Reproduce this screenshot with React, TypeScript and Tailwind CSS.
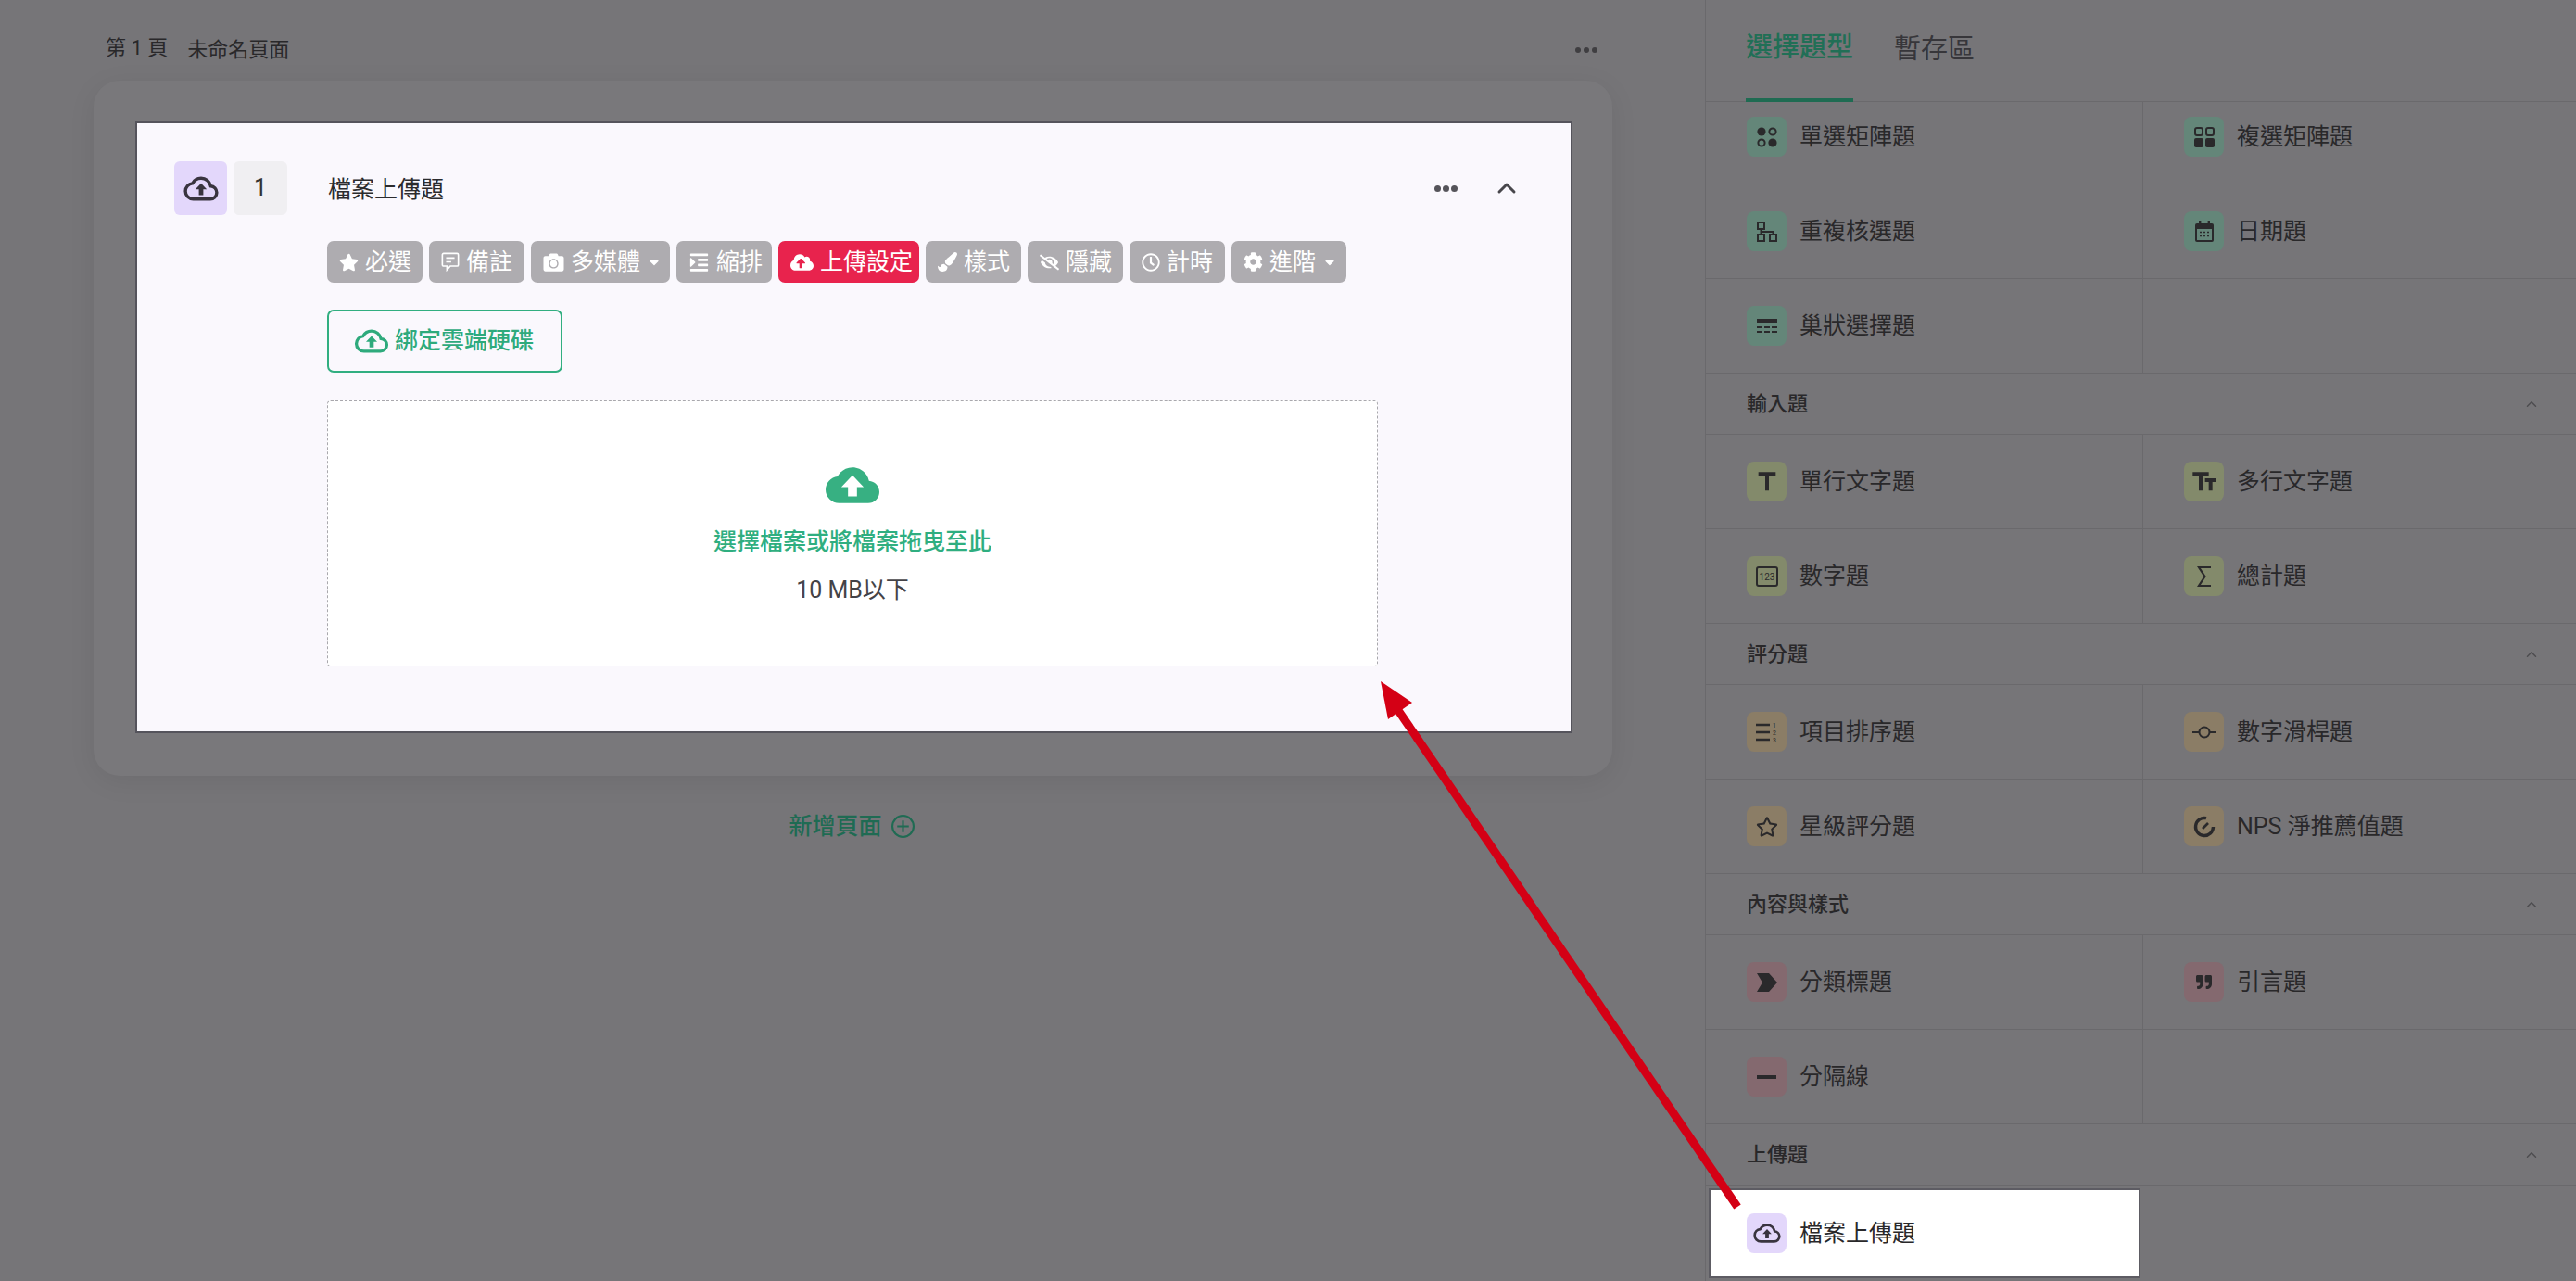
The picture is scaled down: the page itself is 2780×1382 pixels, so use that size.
import type { ReactNode } from "react"
import { ChevronUp } from "lucide-react"
import {
  FaStar,
  FaCamera,
  FaIndent,
  FaCloudUploadAlt,
  FaPaintBrush,
  FaEyeSlash,
  FaRegClock,
  FaCog,
  FaCaretDown,
  FaRegStar,
  FaQuoteRight,
} from "react-icons/fa"
import { MdTitle, MdTextFields } from "react-icons/md"

const CLOUD =
  "M19.35,10.03C18.67,6.59 15.64,4 12,4C9.11,4 6.6,5.64 5.35,8.03C2.34,8.36 0,10.9 0,14A6,6 0 0,0 6,20H19A5,5 0 0,0 24,15C24,12.36 21.95,10.22 19.35,10.03Z"

function CloudOutline({ className }: { className?: string }) {
  return (
    <svg viewBox="-1.5 2.5 27 19" className={className}>
      <path d={CLOUD} fill="none" stroke="currentColor" strokeWidth="2.4" />
      <path d="M12 8l4.4 4.6h-2.7V17h-3.4v-4.4H7.6Z" fill="currentColor" />
    </svg>
  )
}

function CloudSolid({ className }: { className?: string }) {
  return (
    <svg viewBox="0 4 24 16" className={className}>
      <path d={CLOUD} fill="currentColor" />
      <path d="M12 7.6l5 5.2h-3V17h-4v-4.2H7Z" fill="#fff" />
    </svg>
  )
}

const ic = "w-[22px] h-[22px]"

const RadioMatrix = () => (
  <svg viewBox="0 0 22 22" className={ic}>
    <circle cx="5" cy="5" r="4.6" fill="currentColor" />
    <circle cx="17" cy="5" r="3.6" fill="none" stroke="currentColor" strokeWidth="2" />
    <circle cx="5" cy="17" r="3.6" fill="none" stroke="currentColor" strokeWidth="2" />
    <circle cx="17" cy="17" r="4.6" fill="currentColor" />
  </svg>
)

const CheckMatrix = () => (
  <svg viewBox="0 0 22 22" className={ic}>
    <rect x="1" y="1" width="8" height="8" rx="2" fill="none" stroke="currentColor" strokeWidth="2" />
    <rect x="13" y="1" width="8" height="8" rx="2" fill="none" stroke="currentColor" strokeWidth="2" />
    <rect x="0" y="12" width="10" height="10" rx="2" fill="currentColor" />
    <rect x="12" y="12" width="10" height="10" rx="2" fill="currentColor" />
  </svg>
)

const Repeat = () => (
  <svg viewBox="0 0 22 22" className={ic} fill="none" stroke="currentColor" strokeWidth="2">
    <rect x="1" y="1" width="7" height="7" />
    <rect x="1" y="14" width="7" height="7" />
    <rect x="14" y="14" width="7" height="7" />
    <path d="M4.5 8v6M4.5 11h13v3" />
  </svg>
)

const CalendarBox = () => (
  <svg viewBox="0 0 22 24" className="w-[22px] h-[24px]">
    <rect x="1" y="3" width="20" height="20" rx="2" fill="currentColor" />
    <rect x="5" y="0" width="2.4" height="5" fill="currentColor" />
    <rect x="14.6" y="0" width="2.4" height="5" fill="currentColor" />
    <rect x="3" y="9" width="16" height="12" fill="#648679" />
    <path d="M6 12.5h2M10 12.5h2M14 12.5h2M6 16.5h2M10 16.5h2M14 16.5h2" stroke="currentColor" strokeWidth="1.6" />
  </svg>
)

const Nested = () => (
  <svg viewBox="0 0 22 16" className="w-[22px] h-[16px]">
    <rect x="0" y="0" width="22" height="5" fill="currentColor" />
    <path d="M0 9h6M8 9h6M16 9h6M0 14h6M8 14h6M16 14h6" stroke="currentColor" strokeWidth="2" />
  </svg>
)

const NumberBox = () => (
  <svg viewBox="0 0 24 22" className="w-[24px] h-[22px]">
    <rect x="1" y="1" width="22" height="20" rx="2" fill="none" stroke="currentColor" strokeWidth="2" />
    <text x="12" y="15" textAnchor="middle" fontSize="10" fill="currentColor" fontFamily="Roboto, sans-serif">123</text>
  </svg>
)

const Sum = () => (
  <svg viewBox="0 0 16 24" className="w-[16px] h-[24px]" fill="none" stroke="currentColor" strokeWidth="2.2">
    <path d="M15 2H2l6.5 10L2 22h13" />
  </svg>
)

const Sorting = () => (
  <svg viewBox="0 0 24 24" className="w-[24px] h-[24px]">
    <path d="M0 4h15M0 12h15M0 20h15" stroke="currentColor" strokeWidth="2.6" />
    <text x="20" y="7" textAnchor="middle" fontSize="7" fill="currentColor" fontFamily="Roboto, sans-serif">1</text>
    <text x="20" y="15" textAnchor="middle" fontSize="7" fill="currentColor" fontFamily="Roboto, sans-serif">2</text>
    <text x="20" y="23" textAnchor="middle" fontSize="7" fill="currentColor" fontFamily="Roboto, sans-serif">3</text>
  </svg>
)

const Slider = () => (
  <svg viewBox="0 0 26 14" className="w-[26px] h-[14px]" fill="none" stroke="currentColor" strokeWidth="2">
    <circle cx="13" cy="7" r="5.5" />
    <path d="M0 7h7M19 7h7" />
  </svg>
)

const Nps = () => (
  <svg viewBox="0 0 24 24" className="w-[24px] h-[24px]" fill="none" stroke="currentColor" strokeWidth="3.4">
    <path d="M14 2.7A9.5 9.5 0 1 0 21.5 12" />
    <path d="M10 14l6-6" strokeWidth="2.6" />
  </svg>
)

const Section = () => (
  <svg viewBox="0 0 22 22" className={ic}>
    <path d="M0 1h13l9 10-9 10H0l6-10Z" fill="currentColor" />
  </svg>
)

const Note = () => (
  <svg viewBox="0 0 22 23" className="w-[20px] h-[21px]" fill="none" stroke="currentColor" strokeWidth="1.8">
    <path d="M3 1.5h16A1.5 1.5 0 0 1 20.5 3v12a1.5 1.5 0 0 1-1.5 1.5h-8l-4 4.5v-4.5H3A1.5 1.5 0 0 1 1.5 15V3A1.5 1.5 0 0 1 3 1.5Z" />
    <path d="M6 7h10M6 11.5h6" />
  </svg>
)

const Divider = () => <div className="w-[21px] h-[4px] bg-current" />

type Item = { label: string; icon: ReactNode } | null

const boxGreen = "bg-[#648679]"
const boxOlive = "bg-[#838a6b]"
const boxTan = "bg-[#8b7d66]"
const boxPink = "bg-[#84696f]"

const sections: { title?: string; box: string; rows: [Item, Item][] }[] = [
  {
    box: boxGreen,
    rows: [
      [{ label: "單選矩陣題", icon: <RadioMatrix /> }, { label: "複選矩陣題", icon: <CheckMatrix /> }],
      [{ label: "重複核選題", icon: <Repeat /> }, { label: "日期題", icon: <CalendarBox /> }],
      [{ label: "巢狀選擇題", icon: <Nested /> }, null],
    ],
  },
  {
    title: "輸入題",
    box: boxOlive,
    rows: [
      [
        { label: "單行文字題", icon: <MdTitle className="w-[32px] h-[32px]" /> },
        { label: "多行文字題", icon: <MdTextFields className="w-[32px] h-[32px]" /> },
      ],
      [{ label: "數字題", icon: <NumberBox /> }, { label: "總計題", icon: <Sum /> }],
    ],
  },
  {
    title: "評分題",
    box: boxTan,
    rows: [
      [{ label: "項目排序題", icon: <Sorting /> }, { label: "數字滑桿題", icon: <Slider /> }],
      [
        { label: "星級評分題", icon: <FaRegStar className="w-[24px] h-[24px]" /> },
        { label: "NPS 淨推薦值題", icon: <Nps /> },
      ],
    ],
  },
  {
    title: "內容與樣式",
    box: boxPink,
    rows: [
      [
        { label: "分類標題", icon: <Section /> },
        { label: "引言題", icon: <FaQuoteRight className="w-[17px] h-[17px]" /> },
      ],
      [{ label: "分隔線", icon: <Divider /> }, null],
    ],
  },
]

const toolbar: { label: string; width: string; icon: ReactNode; caret?: boolean; active?: boolean }[] = [
  { label: "必選", width: "w-[103px]", icon: <FaStar className="w-[21px] h-[20px]" /> },
  { label: "備註", width: "w-[103px]", icon: <Note /> },
  { label: "多媒體", width: "w-[150px]", icon: <FaCamera className="w-[23px] h-[22px]" />, caret: true },
  { label: "縮排", width: "w-[103px]", icon: <FaIndent className="w-[23px] h-[22px]" /> },
  { label: "上傳設定", width: "w-[152px]", icon: <FaCloudUploadAlt className="w-[25px] h-[22px]" />, active: true },
  { label: "樣式", width: "w-[103px]", icon: <FaPaintBrush className="w-[21px] h-[21px]" /> },
  { label: "隱藏", width: "w-[103px]", icon: <FaEyeSlash className="w-[21px] h-[18px]" /> },
  { label: "計時", width: "w-[103px]", icon: <FaRegClock className="w-[20px] h-[20px]" /> },
  { label: "進階", width: "w-[124px]", icon: <FaCog className="w-[21px] h-[21px]" />, caret: true },
]

function Cell({ item, box }: { item: Item; box: string }) {
  if (!item) return <div />
  return (
    <div className="flex items-center gap-[14px] pl-[44px] h-full">
      <div className={`w-[43px] h-[43px] rounded-[8px] flex items-center justify-center text-[#2a292b] ${box}`}>
        {item.icon}
      </div>
      <span className="text-[25px] text-[#29282a]">{item.label}</span>
    </div>
  )
}

function SectionHead({ title }: { title: string }) {
  return (
    <div className="h-[66px] flex items-center justify-between pl-[44px] pr-[39px] border-b border-[#6a696c]">
      <span className="text-[22px] font-medium text-[#29282a]">{title}</span>
      <ChevronUp className="w-[18px] h-[18px] text-[#4e4d50]" strokeWidth={2} />
    </div>
  )
}

export default function App() {
  return (
    <div className="relative w-[2780px] h-[1382px] flex overflow-hidden bg-[#767578] font-['Roboto','Noto_Sans_CJK_TC',sans-serif]">
      {/* editor */}
      <div className="w-[1840px] shrink-0 pl-[101px]">
        <div className="h-[87px] w-[1639px] flex items-center justify-between pl-[13px] pr-[13px] pt-[20px]">
          <div className="flex items-center gap-[21px] text-[#29282a]">
            <span className="text-[22px] -mt-[4px]">第 1 頁</span>
            <span className="text-[22px]">未命名頁面</span>
          </div>
          <div className="flex gap-[3px] mr-[3px]">
            <span className="w-[6px] h-[6px] rounded-full bg-[#3f3e41]" />
            <span className="w-[6px] h-[6px] rounded-full bg-[#3f3e41]" />
            <span className="w-[6px] h-[6px] rounded-full bg-[#3f3e41]" />
          </div>
        </div>

        <div className="w-[1639px] h-[750px] rounded-[28px] bg-[#79787b] pl-[45px] pt-[44px] shadow-[0_6px_30px_rgba(0,0,0,0.07)]">
          <div className="w-[1551px] h-[660px] bg-[#faf8fd] border-2 border-[#55545c] pl-[40px] pt-[41px]">
            <div className="flex items-center h-[58px]">
              <div className="w-[57px] h-[58px] rounded-[6px] bg-[#e3d7fb] flex items-center justify-center text-[#39343f]">
                <CloudOutline className="w-[38px] h-[27px]" />
              </div>
              <div className="ml-[7px] w-[58px] h-[58px] rounded-[6px] bg-[#f0eff2] flex items-center justify-center text-[25px] text-[#333]">
                1
              </div>
              <span className="ml-[44px] mt-[3px] text-[25px] text-[#2b2b2d]">檔案上傳題</span>
              <div className="ml-auto mr-[53px] flex items-center gap-[37px]">
                <div className="flex gap-[2px]">
                  <span className="w-[7px] h-[7px] rounded-full bg-[#55545a]" />
                  <span className="w-[7px] h-[7px] rounded-full bg-[#55545a]" />
                  <span className="w-[7px] h-[7px] rounded-full bg-[#55545a]" />
                </div>
                <ChevronUp className="w-[32px] h-[32px] text-[#48474c]" strokeWidth={2.2} />
              </div>
            </div>

            <div className="ml-[165px] mt-[28px] flex gap-[7px]">
              {toolbar.map(b => (
                <div
                  key={b.label}
                  className={`h-[45px] rounded-[7px] flex items-center gap-[7px] pl-[13px] text-white text-[25px] shrink-0 ${b.width} ${b.active ? "bg-[#e8234d]" : "bg-[#aeacb0]"}`}
                >
                  {b.icon}
                  <span>{b.label}</span>
                  {b.caret && <FaCaretDown className="w-[16px] h-[16px]" />}
                </div>
              ))}
            </div>

            <div className="ml-[165px] mt-[29px] w-[254px] h-[68px] rounded-[7px] border-2 border-[#31ae80] flex items-center justify-center gap-[6px] pr-[2px] text-[#2eaa7c]">
              <CloudOutline className="w-[38px] h-[26px]" />
              <span className="text-[25px] font-medium">綁定雲端硬碟</span>
            </div>

            <div className="ml-[165px] mt-[30px] w-[1134px] h-[287px] bg-white rounded-[4px] border border-dashed border-[#a9a8ad] flex flex-col items-center pt-[71px]">
              <CloudSolid className="w-[58px] h-[39px] text-[#37b082]" />
              <span className="mt-[24px] text-[25px] font-medium text-[#2fae80] leading-[36px]">選擇檔案或將檔案拖曳至此</span>
              <span className="mt-[16px] text-[25px] text-[#444347] leading-[36px]">10 MB以下</span>
            </div>
          </div>
        </div>

        <div className="w-[1639px] mt-[36px] flex items-center justify-center gap-[10px] pr-[3px] text-[#1f6b53]">
          <span className="text-[25px] font-medium">新增頁面</span>
          <svg viewBox="0 0 24 24" className="w-[25px] h-[25px]" fill="none" stroke="currentColor" strokeWidth="2">
            <circle cx="12" cy="12" r="11" />
            <path d="M12 6v12M6 12h12" />
          </svg>
        </div>
      </div>

      {/* question types */}
      <div className="w-[940px] h-full border-l border-[#6a696c] overflow-hidden">
        <div className="relative z-10 h-[110px] bg-[#767578] border-b border-[#6a696c] flex items-start gap-[44px] pl-[43px]">
          <div className="h-[110px] flex items-center border-b-4 border-[#1f6b52] pb-[2px] -mb-px">
            <span className="text-[29px] font-medium text-[#216f56]">選擇題型</span>
          </div>
          <div className="h-[110px] flex items-center pb-[2px]">
            <span className="text-[29px] text-[#37363a]">暫存區</span>
          </div>
        </div>

        <div className="-mt-[13px]">
          {sections.map(s => (
            <div key={s.box}>
              {s.title && <SectionHead title={s.title} />}
              {s.rows.map((row, i) => (
                <div key={i} className="grid grid-cols-[472px_1fr] h-[102px] border-b border-[#6a696c]">
                  <div className="border-r border-[#6a696c]">
                    <Cell item={row[0]} box={s.box} />
                  </div>
                  <Cell item={row[1]} box={s.box} />
                </div>
              ))}
            </div>
          ))}
          <SectionHead title="上傳題" />
          <div className="w-[472px] h-[102px] pl-[3px] pr-[3px] py-[3px]">
            <div className="h-[97px] bg-white border-2 border-[#5d5c63] flex items-center gap-[14px] pl-[39px]">
              <div className="w-[43px] h-[43px] rounded-[8px] bg-[#e3d7fb] flex items-center justify-center text-[#39343f]">
                <CloudOutline className="w-[30px] h-[23px]" />
              </div>
              <span className="text-[25px] text-[#29282a]">檔案上傳題</span>
            </div>
          </div>
        </div>
      </div>

      {/* annotation arrow */}
      <svg viewBox="0 0 2780 1382" className="absolute inset-0 w-[2780px] h-[1382px] pointer-events-none">
        <path d="M1875 1302L1508 765" stroke="#d40015" strokeWidth="9" />
        <polygon points="1490,735 1524,758 1498,776" fill="#d40015" />
      </svg>
    </div>
  )
}
